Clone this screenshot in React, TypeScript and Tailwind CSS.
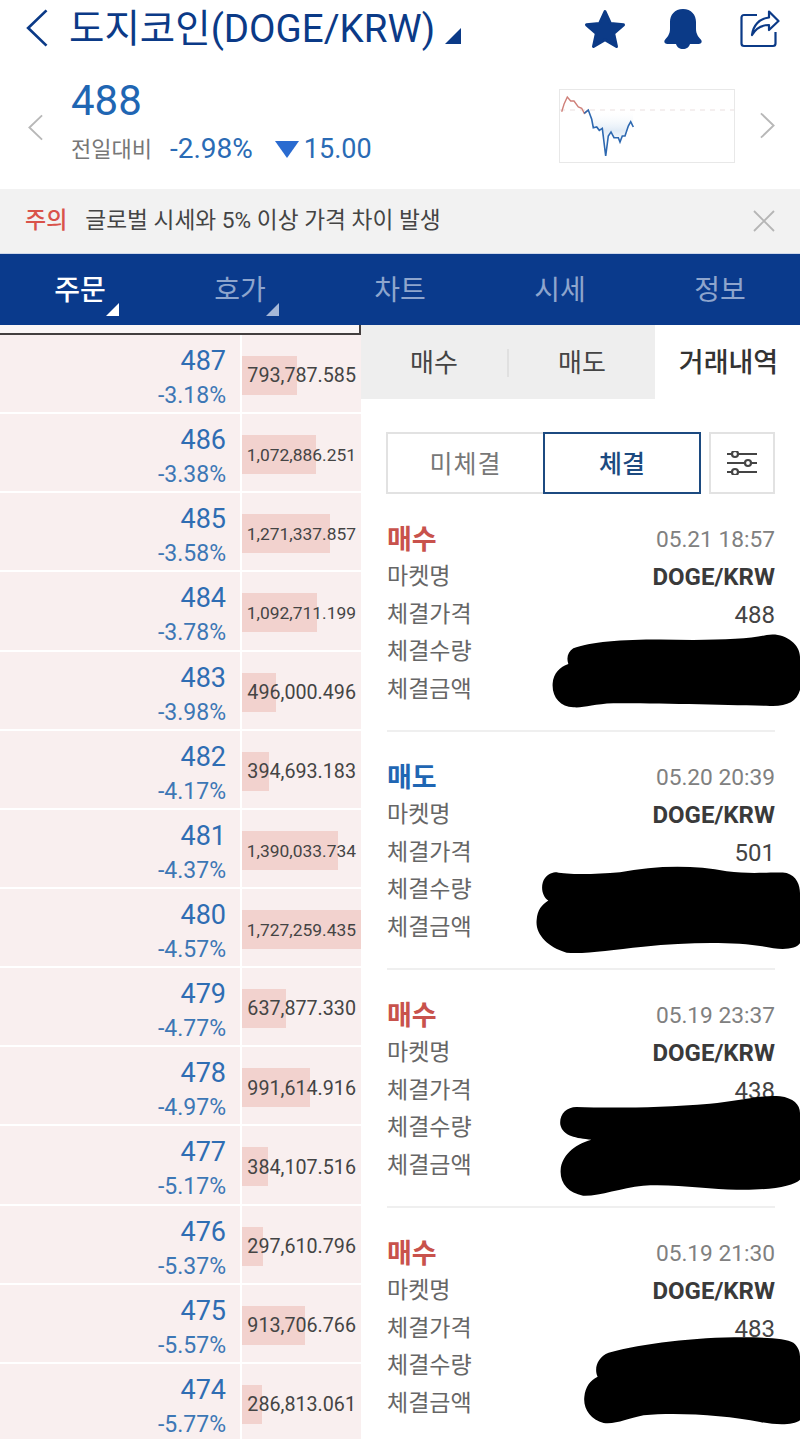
import React from "react";

const orderRows = [
  { price: 487, pct: "-3.18%", qty: 793787.585 },
  { price: 486, pct: "-3.38%", qty: 1072886.251 },
  { price: 485, pct: "-3.58%", qty: 1271337.857 },
  { price: 484, pct: "-3.78%", qty: 1092711.199 },
  { price: 483, pct: "-3.98%", qty: 496000.496 },
  { price: 482, pct: "-4.17%", qty: 394693.183 },
  { price: 481, pct: "-4.37%", qty: 1390033.734 },
  { price: 480, pct: "-4.57%", qty: 1727259.435 },
  { price: 479, pct: "-4.77%", qty: 637877.33 },
  { price: 478, pct: "-4.97%", qty: 991614.916 },
  { price: 477, pct: "-5.17%", qty: 384107.516 },
  { price: 476, pct: "-5.37%", qty: 297610.796 },
  { price: 475, pct: "-5.57%", qty: 913706.766 },
  { price: 474, pct: "-5.77%", qty: 286813.061 },
];

const MAX_QTY = 1727259.435;

const formatQty = (qty: number) =>
  qty.toLocaleString("en-US", {
    minimumFractionDigits: 3,
    maximumFractionDigits: 3,
  });

const trades = [
  {
    side: "매수",
    date: "05.21 18:57",
    price: "488",
    blob: {
      className: "top-[109px] w-[265px] h-[80px]",
      viewBox: "525 150 795 240",
      d: "M640,205 C700,180 850,175 1000,180 C1100,180 1180,175 1220,165 C1270,155 1320,190 1320,230 L1320,330 C1310,365 1280,380 1230,378 C1100,375 900,370 760,370 C700,372 670,385 640,382 C600,380 575,350 578,310 C580,280 600,260 625,252 C618,230 625,215 640,205 Z",
    },
  },
  {
    side: "매도",
    date: "05.20 20:39",
    price: "501",
    blob: {
      className: "top-[104px] w-[265px] h-[92px]",
      viewBox: "525 850 795 275",
      d: "M590,878 C620,885 700,885 780,878 C880,858 1000,855 1100,875 C1180,885 1250,875 1280,880 C1310,890 1320,915 1320,940 L1320,1090 C1310,1105 1280,1110 1240,1105 C1150,1085 1000,1085 850,1100 C750,1110 680,1122 620,1118 C560,1100 525,1060 530,1020 C532,990 545,975 565,962 C545,950 540,915 555,895 C565,882 578,878 590,878 Z",
    },
  },
  {
    side: "매수",
    date: "05.19 23:37",
    price: "438",
    blob: {
      className: "top-[96px] w-[242px] h-[105px]",
      viewBox: "595 340 725 315",
      d: "M650,382 C750,385 900,385 1050,372 C1130,365 1200,345 1260,350 C1300,355 1320,375 1320,400 L1320,600 C1300,620 1230,632 1130,630 C1050,630 950,612 850,618 C780,625 720,650 670,648 C625,640 600,610 603,570 C606,530 640,495 695,480 C650,475 610,470 602,435 C598,405 620,382 650,382 Z",
    },
  },
  {
    side: "매수",
    date: "05.19 21:30",
    price: "483",
    blob: {
      className: "top-[100px] w-[218px] h-[92px]",
      viewBox: "665 1065 655 275",
      d: "M745,1118 C850,1090 1000,1072 1150,1072 C1220,1072 1280,1075 1300,1088 C1315,1100 1320,1115 1320,1130 L1320,1320 C1300,1335 1250,1335 1200,1325 C1100,1305 950,1295 850,1305 C800,1315 770,1332 730,1328 C690,1318 668,1285 672,1250 C675,1220 690,1200 712,1190 C700,1165 712,1130 745,1118 Z",
    },
  },
];

const chartPoints: [number, number][] = [
  [1.7, 21.7], [4, 14.3], [7.3, 7], [10.7, 11], [14, 11], [18.3, 17], [21.7, 18.3], [24.3, 23.3], [28.3, 20],
  [31.7, 29.3], [33.3, 37.7], [36.7, 37], [39.3, 40.3], [42.3, 38.3], [45.7, 66], [48.3, 46], [51, 42], [54, 47.7],
  [58.3, 47.7], [60, 52], [62.3, 46], [65, 46], [68.3, 36], [70.7, 31.7], [73.3, 37],
];

const toPoints = (list: [number, number][]) => list.map((p) => p.join(",")).join(" ");

const MiniChart = () => (
  <div className="w-[176px] h-[74px] border border-[#e8e8e8]">
    <svg width="174" height="72" viewBox="0 0 174 72">
      <defs>
        <linearGradient id="area" x1="0" y1="0" x2="0" y2="1">
          <stop offset="0%" stopColor="#ffffff" stopOpacity="0" />
          <stop offset="45%" stopColor="#cfe0f1" stopOpacity="0.65" />
          <stop offset="100%" stopColor="#ffffff" stopOpacity="0" />
        </linearGradient>
      </defs>
      <line x1="0" y1="20" x2="174" y2="20" stroke="#eadfdf" strokeDasharray="5 5" />
      <polygon points={`26,20 ${toPoints(chartPoints.slice(8))} 73,20`} fill="url(#area)" />
      <polyline points={toPoints(chartPoints.slice(0, 9))} fill="none" stroke="#cf7f78" strokeWidth="1.4" />
      <polyline points={toPoints(chartPoints.slice(7))} fill="none" stroke="#2d68b0" strokeWidth="1.6" />
    </svg>
  </div>
);

const Chevron = ({ dir, className }: { dir: "left" | "right"; className: string }) => (
  <svg className={className} viewBox="0 0 16 28" fill="none" stroke="currentColor" strokeWidth="2">
    <path d={dir === "left" ? "M15 1 L1.5 14 L15 27" : "M1 1 L14.5 14 L1 27"} />
  </svg>
);

const CornerTriangle = ({ className }: { className: string }) => (
  <svg className={className} viewBox="0 0 16 16" fill="currentColor">
    <path d="M16 0 V16 H0 Z" />
  </svg>
);

const Header = () => (
  <div className="h-[70px] flex items-center pl-[25px] pr-[20px] bg-white text-[#0b3a87]">
    <Chevron dir="left" className="w-[24px] h-[38px] mb-[14px]" />
    <div className="ml-[20px] mb-[12px] text-[38.5px] leading-none whitespace-nowrap font-normal">
      도지코인(DOGE/KRW)
    </div>
    <CornerTriangle className="w-[16px] h-[16px] ml-[10px] mt-[2px]" />
    <div className="ml-auto flex items-center gap-[38px] mb-[12px]">
      <svg className="w-[42px] h-[40px]" viewBox="0 0 42 40" fill="currentColor" stroke="currentColor" strokeWidth="3" strokeLinejoin="round">
        <path d="M21 2.5 L26.5 14.5 L39.5 15.8 L29.7 24.5 L32.5 37.5 L21 30.8 L9.5 37.5 L12.3 24.5 L2.5 15.8 L15.5 14.5 Z" />
      </svg>
      <svg className="w-[38px] h-[40px]" viewBox="0 0 38 40" fill="currentColor">
        <path d="M19 0 C10.5 0 6 6 6 13 L6 20 C6 25 3.5 28 1.2 30.5 C-0.6 32.5 0.5 35 3.5 35 L12 35 C12.8 38 15.6 40 19 40 C22.4 40 25.2 38 26 35 L34.5 35 C37.5 35 38.6 32.5 36.8 30.5 C34.5 28 32 25 32 20 L32 13 C32 6 27.5 0 19 0 Z" />
      </svg>
      <svg className="w-[40px] h-[38px]" viewBox="0 0 40 38" fill="none" stroke="currentColor" strokeWidth="2.2" strokeLinejoin="round">
        <path d="M17 5 H4 C2.5 5 1.5 6 1.5 7.5 V33.5 C1.5 35 2.5 36 4 36 H33 C34.5 36 35.5 35 35.5 33.5 V22" />
        <path d="M29 1.5 L38.5 11 L29 20 V15 C22 15 16 18 12 25 C13 16 19 8.5 29 7.5 Z" />
      </svg>
    </div>
  </div>
);

const PriceSummary = () => (
  <div className="h-[119px] flex bg-white pl-[28px] pr-[25px]">
    <Chevron dir="left" className="w-[15px] h-[27px] mt-[44px] text-[#b8b8b8]" />
    <div className="ml-[28px] flex flex-col">
      <div className="text-[42px] leading-none mt-[10px] text-[#1f66b3]">488</div>
      <div className="flex items-center mt-[11px] h-[32px]">
        <span className="text-[22px] text-[#777]">전일대비</span>
        <span className="ml-[18px] text-[28px] text-[#2a6bb5]">-2.98%</span>
        <svg className="w-[24px] h-[18px] ml-[22px] text-[#2a6bd0]" viewBox="0 0 24 18" fill="currentColor">
          <path d="M0 1 H24 L12 18 Z" />
        </svg>
        <span className="ml-[5px] text-[27px] text-[#2a6bb5]">15.00</span>
      </div>
    </div>
    <div className="ml-auto flex items-center gap-[25px] mb-[8px]">
      <MiniChart />
      <Chevron dir="right" className="w-[15px] h-[27px] text-[#b8b8b8]" />
    </div>
  </div>
);

const Notice = () => (
  <div className="h-[64px] flex items-center bg-[#f2f2f2] pl-[25px] pr-[25px]">
    <span className="text-[23px] font-medium text-[#d9534a]">주의</span>
    <span className="ml-[18px] text-[22.7px] text-[#444]">글로벌 시세와 5% 이상 가격 차이 발생</span>
    <svg className="ml-auto w-[22px] h-[22px] text-[#b5b5b5]" viewBox="0 0 22 22" stroke="currentColor" strokeWidth="1.8">
      <path d="M1 1 L21 21 M21 1 L1 21" />
    </svg>
  </div>
);

const navTabs = [
  { label: "주문", active: true, corner: true },
  { label: "호가", active: false, corner: true },
  { label: "차트", active: false, corner: false },
  { label: "시세", active: false, corner: false },
  { label: "정보", active: false, corner: false },
];

const NavBar = () => (
  <div className="h-[72px] grid grid-cols-5 bg-[#0a3a8c] border-t border-[#cfd8ea]">
    {navTabs.map((tab) => (
      <div key={tab.label} className="relative flex items-center justify-center pt-[3px]">
        <span className={`text-[28px] ${tab.active ? "text-white font-medium" : "text-[#8ea5cd]"}`}>{tab.label}</span>
        {tab.corner && (
          <CornerTriangle
            className={`absolute left-[106px] top-[49px] w-[13px] h-[13px] ${tab.active ? "text-white" : "text-[#a6b8d8]"}`}
          />
        )}
      </div>
    ))}
  </div>
);

const OrderBook = () => (
  <div className="w-[361px] shrink-0 bg-[#f9efef] h-full overflow-hidden">
    <div className="h-[10px] bg-[#fbf6f6] border-b-2 border-r-2 border-[#443f3f]" />
    {orderRows.map((row) => (
      <div key={row.price} className="h-[79.15px] flex border-b-2 border-white">
        <div className="w-[240px] flex flex-col items-end pr-[14px] pt-[8px]">
          <span className="text-[27px] leading-[36px] text-[#2f6db3]">{row.price}</span>
          <span className="text-[23px] leading-[33px] text-[#3d77b5]">{row.pct}</span>
        </div>
        <div className="relative flex-1 border-l-2 border-white flex items-center justify-end pr-[5px] pt-[5px]">
          <div
            className="absolute left-0 top-[21px] h-[39px] bg-[#f2d2ce]"
            style={{ width: `${(row.qty / MAX_QTY) * 119}px` }}
          />
          <span className={`relative text-[#444] ${row.qty >= 1000000 ? "text-[17.4px]" : "text-[19.7px]"}`}>
            {formatQty(row.qty)}
          </span>
        </div>
      </div>
    ))}
  </div>
);

const SideTabs = () => (
  <div className="h-[74px] flex">
    <div className="w-[294px] bg-[#eeeeee] flex items-center text-[#444] text-[26px] pt-[2px]">
      <span className="w-[146px] text-center">매수</span>
      <div className="w-[2px] h-[28px] bg-[#e0e0e0]" />
      <span className="flex-1 text-center">매도</span>
    </div>
    <div className="flex-1 flex items-center justify-center text-[27px] font-medium text-[#333] pl-[2px] pt-[2px] whitespace-nowrap">
      거래내역
    </div>
  </div>
);

const FilterRow = () => (
  <div className="mt-[33px] ml-[25px] mr-[25px] flex h-[62px]">
    <div className="w-[157px] border-2 border-r-0 border-[#e2e2e2] flex items-center justify-center pt-[3px] text-[25px] text-[#777] tracking-[1px]">
      미체결
    </div>
    <div className="w-[158px] border-2 border-[#1c4a80] flex items-center justify-center pt-[3px] text-[25px] text-[#1c4a80] font-medium">
      체결
    </div>
    <div className="ml-[8px] flex-1 border-2 border-[#e2e2e2] flex items-center justify-center">
      <svg className="w-[32px] h-[24px] text-[#444]" viewBox="0 0 32 24" fill="none" stroke="currentColor" strokeWidth="2.2">
        <path d="M1 3 H5 M13 3 H31 M1 12 H18 M26 12 H31 M1 21 H5 M13 21 H31" />
        <circle cx="9" cy="3" r="3" />
        <circle cx="22" cy="12" r="3" />
        <circle cx="9" cy="21" r="3" />
      </svg>
    </div>
  </div>
);

const TradeRow = ({ label, children }: { label: string; children: React.ReactNode }) => (
  <div className="h-[37.5px] flex items-center justify-between">
    <span className="text-[23px] text-[#666]">{label}</span>
    {children}
  </div>
);

const TradeCard = ({ trade, last }: { trade: (typeof trades)[number]; last: boolean }) => (
  <div className="relative mb-[27px]">
    <div className={`pb-[21.5px] ${last ? "" : "border-b-2 border-[#efefef]"}`}>
      <div className="h-[37.5px] flex items-center justify-between">
        <span className={`text-[27px] font-bold ${trade.side === "매수" ? "text-[#c8524c]" : "text-[#1f66b3]"}`}>
          {trade.side}
        </span>
        <span className="text-[22.7px] text-[#808080]">{trade.date}</span>
      </div>
      <TradeRow label="마켓명">
        <span className="text-[24px] font-bold text-[#3a3a3a]">DOGE/KRW</span>
      </TradeRow>
      <TradeRow label="체결가격">
        <span className="text-[24px] text-[#444]">{trade.price}</span>
      </TradeRow>
      <TradeRow label="체결수량">
        <span />
      </TradeRow>
      <TradeRow label="체결금액">
        <span />
      </TradeRow>
    </div>
    {/* 개인정보 가림 낙서 */}
    <svg className={`absolute -right-[25px] ${trade.blob.className}`} viewBox={trade.blob.viewBox} preserveAspectRatio="none">
      <path d={trade.blob.d} fill="#000000" />
    </svg>
  </div>
);

const TradeHistory = () => (
  <div className="flex-1 bg-white h-full overflow-hidden">
    <SideTabs />
    <FilterRow />
    <div className="mt-[27px] ml-[26px] mr-[25px]">
      {trades.map((trade, index) => (
        <TradeCard key={trade.date} trade={trade} last={index === trades.length - 1} />
      ))}
    </div>
  </div>
);

export default function App() {
  return (
    <div className="w-[800px] h-[1439px] overflow-hidden bg-white flex flex-col font-['Roboto','Noto_Sans_CJK_KR',sans-serif]">
      <Header />
      <PriceSummary />
      <Notice />
      <NavBar />
      <div className="flex-1 flex min-h-0">
        <OrderBook />
        <TradeHistory />
      </div>
    </div>
  );
}
